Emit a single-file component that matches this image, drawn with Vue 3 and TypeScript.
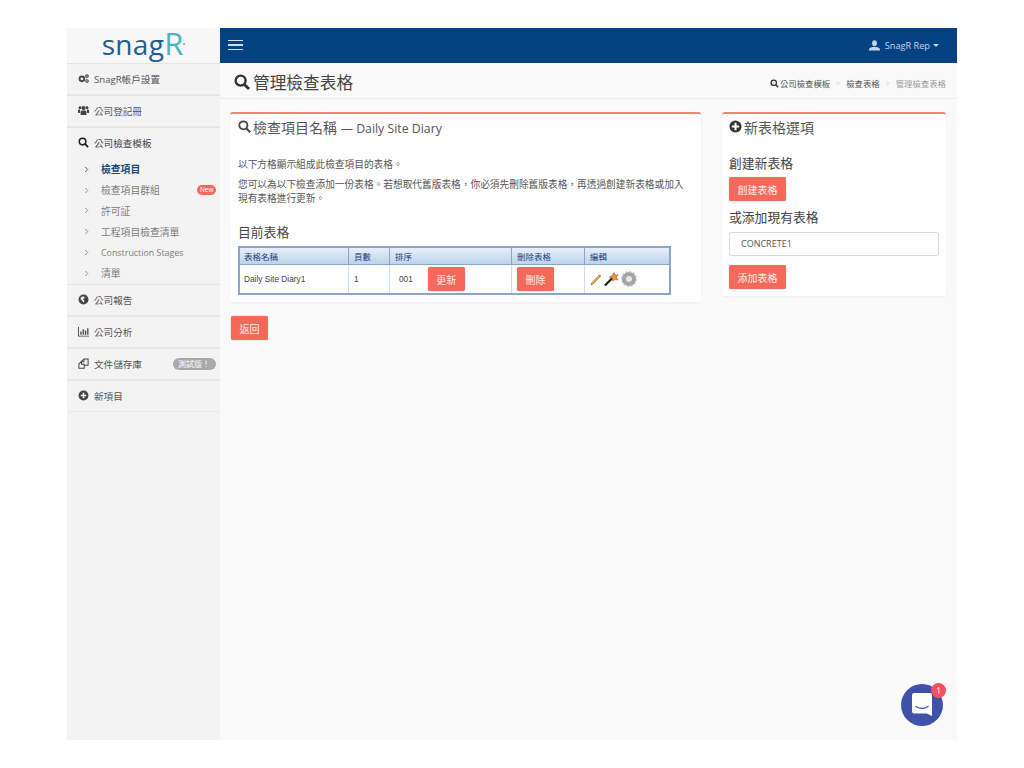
<script setup lang="ts">
interface NavItem {
  label: string
  icon: string
  badge?: string
}
const topNav: NavItem[] = [
  { label: 'SnagR帳戶設置', icon: 'cogs' },
  { label: '公司登記冊', icon: 'users' },
]
const subNav: { label: string; active?: boolean; isNew?: boolean; latin?: boolean }[] = [
  { label: '檢查項目', active: true },
  { label: '檢查項目群組', isNew: true },
  { label: '許可証' },
  { label: '工程項目檢查清單' },
  { label: 'Construction Stages', latin: true },
  { label: '清單' },
]
const bottomNav: NavItem[] = [
  { label: '公司報告', icon: 'globe' },
  { label: '公司分析', icon: 'chart' },
  { label: '文件儲存庫', icon: 'files', badge: '測試版！' },
  { label: '新項目', icon: 'plus' },
]
</script>

<template>
  <div class="page">
    <div class="frame">
      <aside class="sidebar">
        <div class="logo"><span class="logo-snag">snag</span><span class="logo-r">R</span><i class="logo-dot"></i></div>
        <div v-for="item in topNav" :key="item.label" class="nav-item">
          <svg v-if="item.icon === 'cogs'" class="nav-icon" viewBox="0 0 12 12">
            <circle cx="4.3" cy="6.4" r="2.6" fill="none" stroke="#444" stroke-width="2" />
            <circle cx="9.8" cy="3.4" r="1.4" fill="none" stroke="#444" stroke-width="1.2" />
            <circle cx="9.8" cy="8.8" r="1.4" fill="none" stroke="#444" stroke-width="1.2" />
          </svg>
          <svg v-else class="nav-icon" viewBox="0 0 12 12" fill="#444">
            <circle cx="6" cy="3.4" r="2.200" />
            <circle cx="2.2" cy="3" r="1.600" />
            <circle cx="9.8" cy="3" r="1.600" />
            <path d="M2.800 11V7.600C2.800 6.400 4 6 6 6s3.200 .4 3.200 1.600V11z" />
            <path d="M0 8.800V6C0 5 .8 4.800 2.400 4.800L2 8.800zM12 8.800V6c0-1-.8-1.200-2.400-1.200l.4 4z" />
          </svg>
          <span>{{ item.label }}</span>
        </div>
        <div class="nav-group">
          <div class="nav-item plain">
            <svg class="nav-icon" viewBox="0 0 12 12">
              <circle cx="5" cy="5" r="3.6" fill="none" stroke="#222" stroke-width="1.7" />
              <path d="M7.6 7.6L11 11" stroke="#222" stroke-width="2" />
            </svg>
            <span>公司檢查模板</span>
          </div>
          <ul class="sub-nav">
            <li v-for="sub in subNav" :key="sub.label" :class="{ active: sub.active, latin: sub.latin }">
              <svg class="chevron" viewBox="0 0 6 8">
                <path d="M1.5 1L4.5 4L1.5 7" fill="none" stroke="currentColor" stroke-width="1" />
              </svg>
              <span>{{ sub.label }}</span>
              <em v-if="sub.isNew" class="new-badge">New</em>
            </li>
          </ul>
        </div>
        <div v-for="item in bottomNav" :key="item.label" class="nav-item">
          <svg v-if="item.icon === 'globe'" class="nav-icon" viewBox="0 0 12 12">
            <circle cx="6" cy="6" r="5.400" fill="#444" />
            <path d="M3 3.500l3-1 1.500 1.500-2 1.500 1.500 2-1 2-1.500-2.500L3 6z" fill="#f3f3f3" />
          </svg>
          <svg v-else-if="item.icon === 'chart'" class="nav-icon" viewBox="0 0 12 12" fill="#444">
            <path d="M0 1h1v9.500h11v1H0z" />
            <path d="M2.500 6h1.400v3.500H2.500zM5 3.500h1.400v6H5zM7.500 5h1.400v4.500H7.500zM10 2.500h1.400v7H10z" />
          </svg>
          <svg v-else-if="item.icon === 'files'" class="nav-icon" viewBox="0 0 12 12" fill="none" stroke="#444" stroke-width="1.100">
            <path d="M1 6.500L3.800 3.800V6.800H6.800V11.200H1z" />
            <path d="M3.800 3.800L6.500 1H11V8H6.800" />
            <path d="M6.500 1V4H3.800" />
          </svg>
          <svg v-else class="nav-icon" viewBox="0 0 12 12">
            <circle cx="6" cy="6" r="5.400" fill="#444" />
            <path d="M6 3v6M3 6h6" stroke="#f3f3f3" stroke-width="1.800" />
          </svg>
          <span>{{ item.label }}</span>
          <em v-if="item.badge" class="beta-badge">{{ item.badge }}</em>
        </div>
      </aside>

      <div class="main">
        <header class="topbar">
          <div class="burger"><i></i><i></i><i></i></div>
          <div class="user">
            <svg class="user-icon" viewBox="0 0 12 12" fill="#c4d3e6">
              <ellipse cx="6" cy="3.500" rx="2.600" ry="3.300" />
              <path d="M0 11.500V10c0-1.500 2.500-2 4-2.500h4c1.500.5 4 1 4 2.500v1.500z" />
            </svg>
            <span>SnagR Rep</span>
            <i class="caret"></i>
          </div>
        </header>

        <div class="title-bar">
          <h1>
            <svg class="title-icon" viewBox="0 0 16 16">
              <circle cx="6.600" cy="6.600" r="5" fill="none" stroke="#333" stroke-width="2.400" />
              <path d="M10.400 10.400L15 15" stroke="#333" stroke-width="2.800" />
            </svg>
            管理檢查表格
          </h1>
          <nav class="crumbs">
            <svg class="crumb-icon" viewBox="0 0 12 12">
              <circle cx="5" cy="5" r="3.600" fill="none" stroke="#333" stroke-width="1.700" />
              <path d="M7.600 7.600L11 11" stroke="#333" stroke-width="2" />
            </svg>
            <span>公司檢查模板</span>
            <b>&gt;</b>
            <span>檢查表格</span>
            <b>&gt;</b>
            <span class="current">管理檢查表格</span>
          </nav>
        </div>

        <div class="content">
          <div class="left-col">
            <section class="card left-card">
              <h2>
                <svg class="card-icon" viewBox="0 0 16 16">
                  <circle cx="6.600" cy="6.600" r="5" fill="none" stroke="#444" stroke-width="2.200" />
                  <path d="M10.400 10.400L15 15" stroke="#444" stroke-width="2.600" />
                </svg>
                <span>檢查項目名稱 <small>— Daily Site Diary</small></span>
              </h2>
              <p class="first">以下方格顯示組成此檢查項目的表格。</p>
              <p>您可以為以下檢查添加一份表格。若想取代舊版表格，你必須先刪除舊版表格，再透過創建新表格或加入現有表格進行更新。</p>
              <h3 class="table-title">目前表格</h3>
              <table class="forms">
                <thead>
                  <tr>
                    <th class="c-name">表格名稱</th>
                    <th class="c-pages">頁數</th>
                    <th class="c-order">排序</th>
                    <th class="c-del">刪除表格</th>
                    <th>編輯</th>
                  </tr>
                </thead>
                <tbody>
                  <tr>
                    <td>Daily Site Diary1</td>
                    <td>1</td>
                    <td>
                      <div class="order-cell"><span>001</span><button class="btn">更新</button></div>
                    </td>
                    <td><button class="btn">刪除</button></td>
                    <td>
                      <div class="edit-icons">
                        <svg width="12" height="13" viewBox="0 0 12 13">
                          <path d="M1 12L1.800 9.600L8.800 2.400L10.200 3.800L3.200 11z" fill="#e3b450" stroke="#6d5526" stroke-width=".5" />
                          <path d="M8.800 2.400L9.800 1.400L11.200 2.800L10.200 3.800z" fill="#c96a50" />
                        </svg>
                        <svg width="15" height="16" viewBox="0 0 16 16">
                          <path d="M1 15L9 7" stroke="#222" stroke-width="2.400" />
                          <path d="M10.500 1L11.500 3.800L15 3.500L13 6.200L15 9L11.500 8.500L9.500 10.500L8.800 7L5.500 6L8.800 4.300z" fill="#e8983a" stroke="#a85a20" stroke-width=".6" />
                        </svg>
                        <svg width="16" height="16" viewBox="0 0 17 17">
                          <circle cx="8.500" cy="8.500" r="5" fill="none" stroke="#a4a4a4" stroke-width="5" />
                          <circle cx="8.500" cy="8.500" r="7.600" fill="none" stroke="#bcbcbc" stroke-width="1.600" stroke-dasharray="2 1.980" />
                          <circle cx="8.500" cy="8.500" r="3.200" fill="#e6e6e6" />
                        </svg>
                      </div>
                    </td>
                  </tr>
                </tbody>
              </table>
            </section>
            <button class="btn back">返回</button>
          </div>

          <section class="card right-card">
            <h2>
              <svg class="card-icon" viewBox="0 0 14 14">
                <circle cx="7" cy="7" r="6.500" fill="#333" />
                <path d="M7 3v8M3 7h8" stroke="#fff" stroke-width="2.200" />
              </svg>
              新表格選項
            </h2>
            <h3 class="create-title">創建新表格</h3>
            <button class="btn wide">創建表格</button>
            <h3 class="add-title">或添加現有表格</h3>
            <div class="select">CONCRETE1</div>
            <button class="btn wide">添加表格</button>
          </section>
        </div>

        <div class="chat">
          <svg width="22" height="26" viewBox="0 0 22 26">
            <path d="M3 1H19Q21 1 21 3V24L15.500 21.500H3Q1 21.500 1 19.500V3Q1 1 3 1z" fill="#fff" />
            <path d="M5 14.500Q11 18.500 17 14.500" fill="none" stroke="#3f51a8" stroke-width="1.400" stroke-linecap="round" />
          </svg>
          <span class="chat-count">1</span>
        </div>
      </div>
    </div>
  </div>
</template>

<style scoped>
.page {
  width: 1024px;
  height: 768px;
  padding: 28px 67px;
  box-sizing: border-box;
  background: #fff;
  font-family: "Open Sans", "Noto Sans CJK TC", sans-serif;
  color: #555;
  font-size: 10px;
}
.frame {
  display: flex;
  width: 890px;
  height: 712px;
}
.sidebar {
  width: 153px;
  flex: none;
  background: #f3f3f3;
}
.logo {
  height: 35px;
  background: #f7f7f7;
  display: flex;
  align-items: center;
  justify-content: center;
  font-family: "Open Sans", sans-serif;
  font-size: 28px;
  font-weight: 500;
  line-height: 35px;
  color: #1c5f8e;
  letter-spacing: 0.3px;
}
.logo-snag {
  margin-top: -2px;
}
.logo-r {
  color: #4fb0c6;
  letter-spacing: 0;
  margin-top: -5px;
  font-size: 31px;
}
.logo-dot {
  width: 2px;
  height: 2px;
  background: #4fb0c6;
  border-radius: 50%;
  margin-top: -3px;
}
.nav-item {
  height: 32px;
  box-sizing: border-box;
  border-top: 1px solid #e4e4e4;
  border-bottom: 1px solid #e9e9e9;
  display: flex;
  align-items: center;
  padding: 0 4px 1px 11px;
  font-size: 9.600px;
  color: #555;
}
.nav-item.plain {
  border-bottom: none;
  color: #444;
  padding-bottom: 2px;
}
.nav-icon {
  width: 11px;
  height: 11px;
  margin-right: 5px;
  flex: none;
}
.beta-badge {
  margin-left: auto;
  font-style: normal;
  background: #a9a9a9;
  color: #fff;
  font-size: 8px;
  line-height: 12px;
  height: 12px;
  padding: 0 6px 0 5px;
  border-radius: 6px;
}
.sub-nav {
  list-style: none;
  margin: 0;
  padding: 0 4px 0 0;
  height: 125px;
}
.sub-nav li {
  display: flex;
  align-items: center;
  height: 20.800px;
  padding-left: 17px;
  color: #7d7d7d;
  font-size: 9.800px;
}
.sub-nav li.latin {
  font-size: 8.900px;
}
.sub-nav li.active {
  color: #17497e;
  font-weight: 700;
}
.chevron {
  width: 5px;
  height: 7px;
  margin-right: 12px;
  flex: none;
}
.new-badge {
  margin-left: auto;
  font-style: normal;
  background: #ef6a5c;
  color: #fff;
  font-size: 6.500px;
  line-height: 10px;
  height: 10px;
  padding: 0 2.500px;
  border-radius: 5px;
}
.main {
  flex: 1;
  min-width: 0;
  background: #f9f9f9;
  position: relative;
}
.topbar {
  height: 35px;
  background: #054284;
  display: flex;
  align-items: center;
  justify-content: space-between;
  padding: 0 18px 1px 8px;
  box-sizing: border-box;
}
.burger {
  width: 15px;
  display: flex;
  flex-direction: column;
  gap: 3px;
}
.burger i {
  height: 1.500px;
  background: #d5e0ee;
}
.user {
  display: flex;
  align-items: center;
  color: #c4d3e6;
  font-size: 9.200px;
  font-weight: 500;
}
.user-icon {
  width: 11px;
  height: 11px;
  margin-right: 5px;
}
.caret {
  width: 0;
  height: 0;
  margin-left: 3px;
  border-left: 3px solid transparent;
  border-right: 3px solid transparent;
  border-top: 3px solid #c4d3e6;
}
.title-bar {
  height: 36px;
  box-sizing: border-box;
  border-bottom: 1px solid #ececec;
  display: flex;
  align-items: center;
  justify-content: space-between;
  padding: 2px 11px 0 14px;
}
h1 {
  margin: 0;
  display: flex;
  align-items: center;
  gap: 3px;
  font-size: 16.700px;
  font-weight: 400;
  color: #444;
}
.title-icon {
  width: 16px;
  height: 16px;
}
.crumbs {
  display: flex;
  align-items: center;
  font-size: 8.400px;
  color: #555;
  margin-top: 3px;
}
.crumb-icon {
  width: 9px;
  height: 9px;
  margin-right: 1px;
}
.crumbs b {
  margin: 0 6px;
  font-weight: 400;
  font-size: 7px;
  color: #ccc;
}
.crumbs .current {
  color: #999;
}
.content {
  display: flex;
  align-items: flex-start;
  gap: 21px;
  padding: 13px 11px 0 10px;
}
.left-col {
  width: 471px;
  flex: none;
}
.card {
  background: #fff;
  border-top: 2px solid #ee8573;
  border-radius: 3px;
  box-sizing: border-box;
  box-shadow: 0 1px 2px rgba(0, 0, 0, 0.05);
}
.left-card {
  height: 190px;
  padding: 0 7px 0 8px;
}
.right-card {
  flex: 1;
  height: 184px;
  padding: 0 7px;
}
h2 {
  margin: 0;
  height: 25px;
  display: flex;
  align-items: center;
  gap: 2px;
  font-size: 14px;
  font-weight: 400;
  color: #555;
}
h2 small {
  font-size: 12.300px;
}
.card-icon {
  width: 13px;
  height: 13px;
}
p {
  margin: 0 0 4px;
  font-size: 9.700px;
  line-height: 14px;
  color: #555;
  width: 452px;
}
p.first {
  margin-top: 19px;
  margin-bottom: 6px;
}
h3 {
  margin: 0;
  font-size: 12.800px;
  font-weight: 400;
  line-height: 18px;
  color: #444;
}
.table-title {
  margin-top: 17px;
  margin-bottom: 5px;
}
.forms {
  width: 433px;
  border-collapse: collapse;
  border: 2px solid #8aa5c8;
  font-family: "Liberation Sans", "Noto Sans CJK TC", sans-serif;
  font-size: 8.300px;
  color: #444;
}
.forms th {
  height: 16px;
  padding: 0 0 0 5px;
  text-align: left;
  font-weight: 400;
  font-size: 8.500px;
  color: #1e3f78;
  background: linear-gradient(#e6eff9, #bdd3eb);
  border: 1px solid #8aa5c8;
}
.forms td {
  height: 28px;
  padding: 0 0 0 5px;
  border-left: 1px solid #cfdbe9;
}
.forms th:first-child,
.forms td:first-child {
  padding-left: 4px;
}
.c-name {
  width: 104px;
}
.c-pages {
  width: 35px;
}
.c-order {
  width: 116px;
}
.c-del {
  width: 67px;
}
.order-cell {
  display: flex;
  align-items: center;
  gap: 15px;
  padding-left: 4px;
}
.order-cell span {
  margin-top: -1px;
}
.btn {
  border: none;
  background: #f4695a;
  color: #fdeeea;
  font-family: "Open Sans", "Noto Sans CJK TC", sans-serif;
  font-size: 10px;
  width: 37px;
  height: 24px;
  padding: 0;
  border-radius: 2px;
  box-shadow: 0 0 1px rgba(120, 30, 20, 0.5);
  display: block;
}
.edit-icons {
  display: flex;
  align-items: center;
  gap: 2px;
}
.back {
  margin-top: 14px;
  margin-left: 1px;
}
.create-title {
  margin-top: 15px;
}
.wide {
  width: 57px;
  margin-top: 5px;
}
.add-title {
  margin-top: 7px;
}
.select {
  height: 24px;
  box-sizing: border-box;
  margin-top: 6px;
  border: 1px solid #d9d9d9;
  border-radius: 3px;
  padding: 0 11px;
  line-height: 22px;
  font-size: 9px;
  color: #555;
  background: #fff;
}
.select + .wide {
  margin-top: 9px;
}
.chat {
  position: absolute;
  right: 14px;
  bottom: 14px;
  width: 42px;
  height: 42px;
  border-radius: 50%;
  background: #3f51a8;
  display: flex;
  align-items: center;
  justify-content: center;
}
.chat-count {
  position: absolute;
  top: -1px;
  right: -3px;
  width: 15px;
  height: 15px;
  border-radius: 50%;
  background: #f4505f;
  color: #fff;
  font-size: 9px;
  line-height: 15px;
  text-align: center;
}
</style>
